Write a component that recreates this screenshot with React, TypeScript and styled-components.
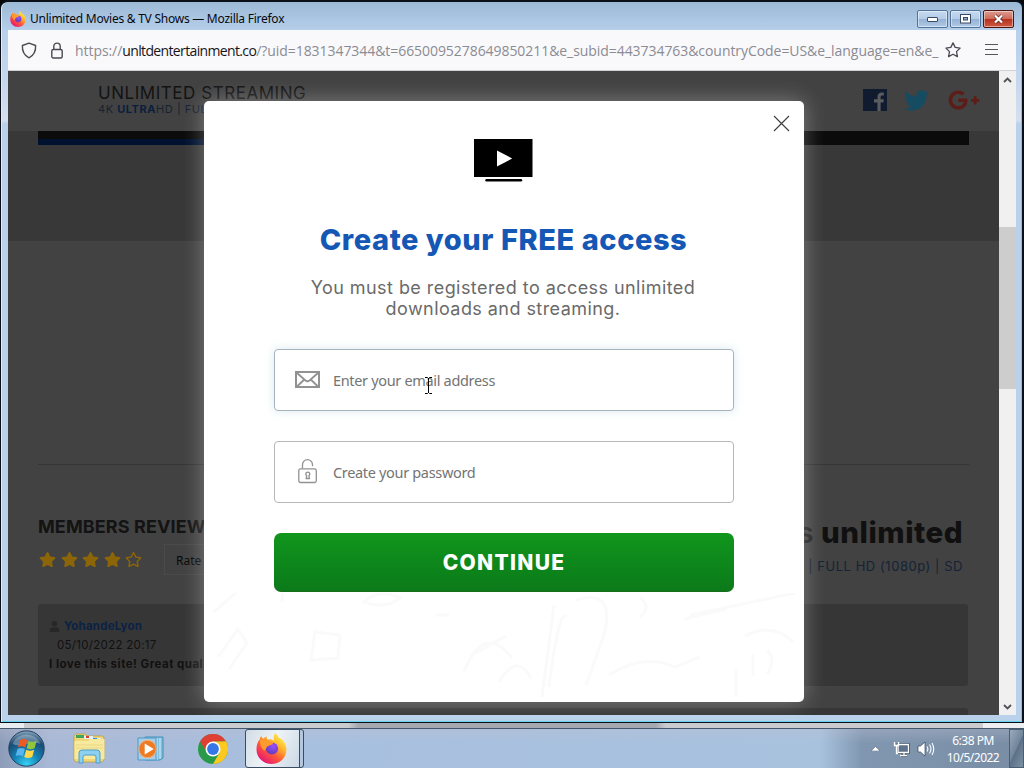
import React from "react";
import styled, { createGlobalStyle } from "styled-components";
import { FaGooglePlusG, FaRegStar, FaStar, FaTwitter, FaUser } from "react-icons/fa";

const GlobalStyle = createGlobalStyle`
  * {
    box-sizing: border-box;
  }
  body {
    margin: 0;
    overflow: hidden;
  }
  svg {
    display: block;
    flex: none;
  }
`;

const Desktop = styled.div`
  width: 1024px;
  height: 768px;
  display: flex;
  flex-direction: column;
  background: #05070b;
  font-family: "Open Sans", sans-serif;
`;

const BrowserWindow = styled.div`
  height: 723px;
  display: flex;
  flex-direction: column;
  border: solid #0b1018;
  border-width: 2px 2px 1px 1px;
  border-radius: 8px 8px 0 0;
  padding: 0 6px 0 7px;
  background: linear-gradient(180deg, #9cb9d6 0, #b7d0ec 30px, #c9d9ee 90px, #d6dff0 118px, #b9d1ea 122px, #b9d1ea 100%);
  box-shadow: inset 1px 0 #e2ecf5, inset -1px -1px #62d3ee;
`;

const TitleBar = styled.div`
  height: 28px;
  display: flex;
  align-items: center;
  padding: 5px 2px 0 2px;
`;

const WindowTitle = styled.div`
  flex: 1;
  padding-left: 4px;
  font-family: "Noto Sans", sans-serif;
  font-size: 12px;
  line-height: 18px;
  letter-spacing: -0.25px;
  color: #060a10;
  white-space: nowrap;
`;

const WindowButtons = styled.div`
  display: flex;
  gap: 2px;
`;

const WindowButton = styled.div<{ $danger?: boolean }>`
  width: 31px;
  height: 18px;
  display: flex;
  align-items: center;
  justify-content: center;
  border: 1px solid ${(p) => (p.$danger ? "#4e1410" : "#54739b")};
  border-radius: 2px;
  box-shadow: inset 0 0 0 1px rgba(255, 255, 255, 0.45);
  background: ${(p) =>
    p.$danger
      ? "linear-gradient(#dc9c90 0, #cf6a5a 48%, #b52f1d 50%, #cf5a42 100%)"
      : "linear-gradient(#c5d9ef 0, #b5cce8 48%, #94b1d4 50%, #b0cae6 100%)"};
`;

const AddressBar = styled.div`
  height: 41px;
  display: flex;
  align-items: center;
  padding: 0 17px 0 13px;
  background: #f9f9fb;
  border-bottom: 1px solid #cfcfd8;
`;

const Url = styled.div`
  flex: 1;
  padding: 1px 0 0 12px;
  font-size: 14px;
  letter-spacing: -0.06px;
  color: #8b8b93;
  white-space: nowrap;

  b {
    font-weight: 400;
    letter-spacing: -0.64px;
    color: #15141a;
  }
`;

const Viewport = styled.div`
  height: 644px;
  display: flex;
  position: relative;
`;

const Page = styled.div`
  width: 991px;
  height: 644px;
  overflow: hidden;
  background: #424242;
  font-family: Inter, sans-serif;
`;

const SiteHeader = styled.div`
  height: 60px;
  display: flex;
  justify-content: space-between;
  padding: 12px 19px 0 90px;
`;

const Brand = styled.div`
  font-size: 17px;
  line-height: 20px;
  letter-spacing: 0.54px;
  color: #131313;
  white-space: nowrap;
`;

const Tagline = styled.div`
  font-size: 11px;
  line-height: 13px;
  letter-spacing: 0.55px;
  color: #18222f;

  b {
    color: #0a1e3e;
  }
`;

const Socials = styled.div`
  display: flex;
  align-items: center;
  height: 34px;
`;

const Hero = styled.div`
  height: 110px;
  padding: 0 30px;
  background: #383838;
`;

const PlayerBar = styled.div`
  height: 14px;
  border-bottom: 6px solid #0d0d0d;
  background: #0b0b0b;
  border-image: linear-gradient(90deg, #001230 0 40%, #0b0b0b 40%) 1;
  border-top: 0;
  border-left: 0;
  border-right: 0;
`;

const Player = styled.div`
  height: 224px;
  margin: 0 30px;
  border-bottom: 1px solid #353535;
`;

const Columns = styled.div`
  height: 139px;
  display: flex;
  justify-content: space-between;
  padding: 48px 36px 0 30px;
`;

const SectionTitle = styled.div`
  font-size: 18px;
  line-height: 27px;
  font-weight: 700;
  letter-spacing: 0.1px;
  color: #131313;
`;

const Rating = styled.div`
  display: flex;
  align-items: center;
  gap: 4.6px;
  margin-top: 4px;
  padding-left: 1px;
  color: #8b6508;
`;

const RateButton = styled.div`
  margin-left: 17px;
  width: 90px;
  height: 31px;
  padding: 7px 0 0 11px;
  border: 1px solid #4a4a4a;
  font-family: "Noto Sans", sans-serif;
  font-size: 12px;
  color: #080808;
`;

const Offer = styled.div`
  text-align: right;
`;

const OfferTitle = styled.div`
  font-size: 29.5px;
  line-height: 39px;
  font-weight: 800;
  letter-spacing: 0.5px;
  color: #101010;

  span {
    font-weight: 600;
    color: #222;
  }
`;

const OfferFormats = styled.div`
  margin-top: 6px;
  font-size: 13px;
  line-height: 16px;
  letter-spacing: 0.55px;
  color: #142236;
`;

const Review = styled.div`
  height: 82px;
  margin: 0 31px 22px 30px;
  padding: 13px 11px;
  border-radius: 3px;
  background: #363636;
  font-size: 11.5px;
  line-height: 19px;
  color: #111;
  white-space: nowrap;
`;

const ReviewAuthor = styled.div`
  display: flex;
  align-items: center;
  gap: 4px;
  font-weight: 700;
  letter-spacing: 0.2px;
  color: #0b2245;
`;

const ReviewDate = styled.div`
  padding-left: 8px;
  letter-spacing: 0.3px;
`;

const ReviewText = styled.div`
  font-weight: 700;
  letter-spacing: 0.48px;
`;

const Scrollbar = styled.div`
  width: 17px;
  height: 644px;
  display: flex;
  flex-direction: column;
  align-items: center;
  background: #f0f0f0;
`;

const ScrollArrow = styled.div`
  height: 17px;
  display: flex;
  align-items: center;
`;

const ScrollThumb = styled.div`
  width: 17px;
  height: 162px;
  margin: 139px 0 309px;
  background: #cdcdcd;
`;

const Modal = styled.div`
  position: absolute;
  left: 196px;
  top: 30px;
  width: 600px;
  height: 601px;
  display: flex;
  flex-direction: column;
  align-items: center;
  padding-top: 38px;
  border-radius: 5px;
  background: #fff;
  box-shadow: 0 0 22px rgba(255, 255, 255, 0.32);
  font-family: Inter, sans-serif;
`;

const CloseButton = styled.div`
  position: absolute;
  top: 14px;
  right: 14px;
`;

const Logo = styled.div`
  padding-right: 2px;
`;

const ModalTitle = styled.div`
  margin-top: 40px;
  padding-right: 1px;
  font-size: 29px;
  line-height: 36px;
  font-weight: 800;
  letter-spacing: 0.56px;
  color: #1557b5;
  white-space: nowrap;
`;

const ModalText = styled.div`
  margin-top: 19px;
  padding-right: 2px;
  text-align: center;
  font-size: 18px;
  line-height: 21px;
  letter-spacing: 0.44px;
  color: #6a6a6a;
  white-space: nowrap;
`;

const Field = styled.div<{ $focused?: boolean }>`
  position: relative;
  width: 460px;
  height: 62px;
  flex: none;
  display: flex;
  align-items: center;
  margin-top: 30px;
  padding: 0 0 2px 20px;
  border: 1px solid ${(p) => (p.$focused ? "#a5b3bd" : "#b8b8bb")};
  border-radius: 4px;
  background: #fff;
  box-shadow: ${(p) => (p.$focused ? "0 0 10px rgba(110, 170, 195, 0.25)" : "none")};
`;

const Placeholder = styled.div`
  padding: 2px 0 0 13px;
  font-family: "Noto Sans", sans-serif;
  font-size: 14.5px;
  letter-spacing: -0.33px;
  color: #747474;
  white-space: nowrap;
`;

const TextCursor = styled.div`
  position: absolute;
  left: 149px;
  top: 27px;
`;

const ContinueButton = styled.div`
  width: 460px;
  height: 59px;
  display: flex;
  align-items: center;
  justify-content: center;
  margin-top: 30px;
  padding-top: 1px;
  border-radius: 7px;
  border-bottom: 1px solid #1a6c1d;
  background: linear-gradient(#10961d, #0b7a19);
  color: #fff;
  font-size: 21px;
  font-weight: 800;
  letter-spacing: 1.3px;
`;

const DesktopStrip = styled.div`
  height: 5px;
  background: linear-gradient(90deg, #e8edf2 0 24px, #c9cbcf 24px 34%, #a5a7b1 35% 64%, #c9cbcf 65% 983px, #eceef2 983px);
`;

const Taskbar = styled.div`
  height: 40px;
  display: flex;
  align-items: center;
  border-top: 1px solid #43576a;
  background: linear-gradient(rgba(190, 190, 210, 0.35), rgba(255, 255, 255, 0) 14px),
    linear-gradient(90deg, #8d9db9 0, #a8b9d7 50px, #a8c0df 310px, #a8c2de 820px, #8197b1 862px, #7a8fa6 1000px);
`;

const StartButton = styled.div`
  padding-left: 8px;
`;

const TaskIcon = styled.div<{ $gap: number }>`
  margin-left: ${(p) => p.$gap}px;
`;

const ActiveTask = styled.div`
  width: 59px;
  height: 39px;
  display: flex;
  align-items: center;
  margin-left: 17px;
  padding-left: 10px;
  border: 1px solid #3a4c61;
  border-radius: 3px;
  background: linear-gradient(90deg, rgba(255, 255, 255, 0) 53px, #3a4c61 53px 54px, #b3c7de 54px),
    linear-gradient(115deg, #d2dce6, #eef3f7 45%, #c7d5e3);
`;

const Tray = styled.div`
  margin-left: auto;
  display: flex;
  align-items: center;
  height: 39px;
  gap: 6px;
`;

const Clock = styled.div`
  width: 56px;
  margin-left: 4px;
  font-family: "Noto Sans", sans-serif;
  font-size: 12px;
  line-height: 17px;
  letter-spacing: -0.5px;
  text-align: center;
  color: #fff;
  white-space: nowrap;
`;

const ShowDesktop = styled.div`
  width: 15px;
  height: 39px;
  margin-left: 2px;
  border: 1px solid #4c5d70;
  background: linear-gradient(115deg, #9aaabb 0, #71849a 50%, #5b6f86 51%, #7d91a6 100%);
`;

const FirefoxIcon = ({ size }: { size: number }) => (
  <svg width={size} height={size} viewBox="0 0 32 32">
    <defs>
      <linearGradient id="ffBody" x1="0.85" y1="0.1" x2="0.2" y2="0.95">
        <stop offset="0" stopColor="#fff04a" />
        <stop offset="0.3" stopColor="#ffb52e" />
        <stop offset="0.6" stopColor="#ff5a36" />
        <stop offset="1" stopColor="#e3127a" />
      </linearGradient>
      <radialGradient id="ffGlobe" cx="0.6" cy="0.3" r="0.8">
        <stop offset="0" stopColor="#9a4dff" />
        <stop offset="1" stopColor="#5a3bb0" />
      </radialGradient>
    </defs>
    <path
      d="M20 0c2 2 3 3 3.400 5 4 1 8 6 8 12 0 9-7 15-15.400 15S.5 25.500.5 17c0-4 1-8 3.500-10.500C4 5 4.500 4 5.500 3c.5 1.500 1 2.300 2 3 1-1.500 2-2 3.500-2.500L11.500 7c3-1 5-.5 7 1C18 5 18 2.500 20 0z"
      fill="url(#ffBody)"
    />
    <circle cx="16.500" cy="16" r="6.300" fill="url(#ffGlobe)" />
    <path d="M4 7.500c3-2 8-1.500 10 1.500 1.500.5 3 .5 4 1-.8 2-3 2.500-5 3.200-2 1-2.500 2-3.800 5.200C5 16 4 11 4 7.500z" fill="#ff9a2c" />
  </svg>
);

const StartOrb = () => (
  <svg width="37" height="37" viewBox="0 0 37 37">
    <defs>
      <radialGradient id="orb" cx="0.5" cy="0.95" r="0.95">
        <stop offset="0" stopColor="#35d3f5" />
        <stop offset="0.4" stopColor="#1480b4" />
        <stop offset="0.75" stopColor="#1b4a74" />
        <stop offset="1" stopColor="#8ba9bf" />
      </radialGradient>
    </defs>
    <circle cx="18.500" cy="18.500" r="17.700" fill="url(#orb)" stroke="#24405d" />
    <path d="M4.500 14a15 15 0 0 1 28 0c-8-4-18 4-28 0z" fill="#fff" opacity="0.3" />
    <path d="M12 10c3-1.500 5-1.300 7.300.2l-2 7.300c-2.300-1.500-4.500-1.600-7.300-.3z" fill="#ef5a22" />
    <path d="M20.600 11c2.600 1.300 5 1.200 8-.2l-2 7.400c-3 1.400-5.400 1.300-8 .1z" fill="#8fc63d" />
    <path d="M9.600 18.800c2.800-1.300 5-1.200 7.300.2l-2 7.300c-2.300-1.400-4.500-1.500-7.300-.2z" fill="#58b5ed" />
    <path d="M18.200 19.800c2.600 1.300 5 1.200 8-.1l-2 7.200c-3 1.400-5.400 1.400-8 .2z" fill="#ffd84a" />
  </svg>
);

const ExplorerIcon = () => (
  <svg width="33" height="31" viewBox="0 0 33 31">
    <path d="M1 3l2-2h9l2 2h16l1 2v22l-2 2H3l-2-2z" fill="#efd778" stroke="#bb9d44" strokeWidth="0.8" />
    <path d="M3 2h8v3H3z" fill="#42a35c" />
    <path d="M11 3h9v3h-9z" fill="#e9f1f5" />
    <path d="M13 3h3v2h-3z" fill="#cf4433" />
    <path d="M19 5h9v3h-9z" fill="#dcebf8" />
    <path d="M20 5h4v2h-4z" fill="#3a8dd4" />
    <path d="M1.500 8h14l2-2h14v20H1.500z" fill="#f7e99e" />
    <path d="M3 12h27M3 15h27" stroke="#e9d27b" strokeWidth="0.8" />
    <path d="M6 30V20q0-3 3-3h15q3 0 3 3v10h-4v-6q0-2-2-2h-9q-2 0-2 2v6z" fill="#8dd0ef" stroke="#4b9fcc" />
  </svg>
);

const MediaPlayerIcon = () => (
  <svg width="28" height="26" viewBox="0 0 28 26">
    <path d="M8 1h18v21l-3 2H8z" fill="#83bedd" stroke="#428fb9" />
    <path d="M20 2v22M23 2v21" stroke="#d5edf8" />
    <path d="M1 2h18v22H1z" fill="#a9cde4" stroke="#4b9bc7" />
    <circle cx="10.500" cy="13" r="8.700" fill="#ee7a22" stroke="#f9b27a" strokeWidth="0.8" />
    <path d="M7.700 7.500l9 5.500-9 5.500z" fill="#fff" />
  </svg>
);

const ChromeIcon = () => (
  <svg width="30" height="30" viewBox="0 0 30 30">
    <circle cx="15" cy="15" r="15" fill="#2a9a4a" />
    <path d="M2 7.500A15 15 0 0 1 28 7.500H15L9 18.500z" fill="#df4034" />
    <path d="M28 7.500A15 15 0 0 1 15 30l6.500-11.300L21.500 8z" fill="#fbc91f" />
    <path d="M15 7.500h13l-6.500 4z" fill="#fbc91f" />
    <circle cx="15" cy="15" r="7.500" fill="#fff" />
    <circle cx="15" cy="15" r="5.900" fill="#3578e5" />
  </svg>
);

const ShieldIcon = () => (
  <svg width="16" height="17" viewBox="0 0 16 17" fill="none" stroke="#4a4a52" strokeWidth="1.4" strokeLinejoin="round">
    <path d="M8 1.200l6.600 2.300c.3 5.500-1.200 9.600-6.600 12.300C2.600 13.100 1.100 9 1.400 3.500z" />
  </svg>
);

const LockIcon = () => (
  <svg width="12" height="17" viewBox="0 0 12 17" fill="none" stroke="#4a4a52" strokeWidth="1.400">
    <rect x="0.800" y="7.500" width="10.400" height="8.500" rx="1.500" />
    <path d="M2.800 7.500V4.300a3.200 3.200 0 0 1 6.400 0v3.200" />
  </svg>
);

const BookmarkIcon = () => (
  <svg width="16" height="16" viewBox="0 0 16 16" fill="none" stroke="#4a4a52" strokeWidth="1.300" strokeLinejoin="round">
    <path d="M8 .9l2.200 4.500 4.900.7-3.600 3.500.9 5-4.400-2.400-4.400 2.400.9-5L.9 6.100l4.900-.7z" />
  </svg>
);

const MenuIcon = styled.div`
  width: 13px;
  height: 11px;
  margin: -1px 1px 0 24px;
  border: solid #55555d;
  border-width: 1px 0;
  display: flex;
  align-items: center;

  &::after {
    content: "";
    width: 13px;
    height: 1px;
    background: #55555d;
  }
`;

const FacebookIcon = () => (
  <svg width="24" height="22" viewBox="0 0 24 22">
    <path d="M0 0h24v22H0z" fill="#101b30" />
    <path d="M14.500 22v-8.500H11v-3.300h3.500V8c0-3 1.500-4.500 4.500-4.500h1.800v3h-1.400c-1.400 0-1.800.5-1.800 1.700v2h3.200l-.4 3.300h-2.800V22z" fill="#5a5c60" />
  </svg>
);

const TvLogo = () => (
  <svg width="60" height="43" viewBox="0 0 60 43">
    <path d="M1 0h58.500v38H1z" fill="#000" />
    <path d="M24 11.500v16L39.200 19.500z" fill="#fff" />
    <path d="M13.500 41.200h34.500" stroke="#000" strokeWidth="2.400" strokeLinecap="round" />
  </svg>
);

const EnvelopeIcon = () => (
  <svg width="25" height="17" viewBox="0 0 25 17" fill="none" stroke="#929292">
    <rect x="1" y="1" width="23" height="15" strokeWidth="2" />
    <path d="M2 2l8.500 7.500q2 1.500 4 0L23 2M2 15.500l7.300-7M23 15.500l-7.300-7" strokeWidth="1.800" />
  </svg>
);

const PadlockIcon = () => (
  <svg width="25" height="26" viewBox="0 0 25 26" fill="none" stroke="#929292" strokeWidth="1.300">
    <rect x="3.800" y="10.800" width="17.500" height="13.700" rx="1.800" />
    <path d="M7.500 10.500V6.700a5 5 0 0 1 10 0v1.500" />
    <path d="M11.200 20.500l.5-2.800a2 2 0 1 1 2.200 0l.5 2.800z" />
  </svg>
);

const Doodles = styled.svg`
  position: absolute;
  left: 0;
  bottom: 0;
`;

const App = () => {
  return (
    <Desktop>
      <GlobalStyle />
      <BrowserWindow>
        <TitleBar>
          <FirefoxIcon size={16} />
          <WindowTitle>Unlimited Movies &amp; TV Shows — Mozilla Firefox</WindowTitle>
          <WindowButtons>
            <WindowButton>
              <svg width="12" height="6" viewBox="0 0 12 6">
                <rect x="0.500" y="1.500" width="10" height="4" rx="0.500" fill="#fff" stroke="#3b4960" />
              </svg>
            </WindowButton>
            <WindowButton>
              <svg width="11" height="10" viewBox="0 0 11 10">
                <rect x="0.500" y="0.500" width="10" height="8.500" fill="#fff" stroke="#3b4960" />
                <rect x="3.500" y="3.500" width="4" height="2.500" fill="#8dabcf" stroke="#3b4960" />
              </svg>
            </WindowButton>
            <WindowButton $danger>
              <svg width="13" height="10" viewBox="0 0 13 10">
                <path d="M3 1.500l7 7M10 1.500l-7 7" stroke="#5d2a2a" strokeWidth="3.600" />
                <path d="M3 1.500l7 7M10 1.500l-7 7" stroke="#fff" strokeWidth="2.200" />
              </svg>
            </WindowButton>
          </WindowButtons>
        </TitleBar>

        <AddressBar>
          <ShieldIcon />
          <svg width="14" height="1" />
          <LockIcon />
          <Url>
            https://<b>unltdentertainment.co</b>
            /?uid=1831347344&amp;t=6650095278649850211&amp;e_subid=443734763&amp;countryCode=US&amp;e_language=en&amp;e_
          </Url>
          <BookmarkIcon />
          <MenuIcon />
        </AddressBar>

        <Viewport>
          <Page>
            <SiteHeader>
              <div>
                <Brand>UNLIMITED STREAMING</Brand>
                <Tagline>
                  4K <b>ULTRA</b>HD | FULL HD
                </Tagline>
              </div>
              <Socials>
                <FacebookIcon />
                <svg width="17" height="1" />
                <FaTwitter size={25} color="#164c62" />
                <svg width="19" height="1" />
                <FaGooglePlusG size={32} color="#5c1d18" />
              </Socials>
            </SiteHeader>
            <Hero>
              <PlayerBar />
            </Hero>
            <Player />
            <Columns>
              <div>
                <SectionTitle>MEMBERS REVIEWS</SectionTitle>
                <Rating>
                  <FaStar size={17} />
                  <FaStar size={17} />
                  <FaStar size={17} />
                  <FaStar size={17} />
                  <FaRegStar size={17} />
                  <RateButton>Rate</RateButton>
                </Rating>
              </div>
              <Offer>
                <OfferTitle>
                  <span>s</span> unlimited
                </OfferTitle>
                <OfferFormats>| FULL HD (1080p) | SD</OfferFormats>
              </Offer>
            </Columns>
            <Review>
              <ReviewAuthor>
                <FaUser size={11} color="#272727" />
                YohandeLyon
              </ReviewAuthor>
              <ReviewDate>05/10/2022 20:17</ReviewDate>
              <ReviewText>I love this site! Great quality</ReviewText>
            </Review>
            <Review />
          </Page>

          <Scrollbar>
            <ScrollArrow>
              <svg width="9" height="6" viewBox="0 0 9 6">
                <path d="M1 5l3.500-3.500L8 5" fill="none" stroke="#50535a" strokeWidth="1.900" />
              </svg>
            </ScrollArrow>
            <ScrollThumb />
            <ScrollArrow>
              <svg width="9" height="6" viewBox="0 0 9 6">
                <path d="M1 1l3.500 3.500L8 1" fill="none" stroke="#50535a" strokeWidth="1.900" />
              </svg>
            </ScrollArrow>
          </Scrollbar>

          <Modal>
            <Doodles width="600" height="109" viewBox="0 41 600 109" fill="none" stroke="#fafafa" strokeWidth="3">
              <path d="M10 60l25-22M14 105l20-28 9 14-18 26M60 38q22-20 18 12M107 108l4-28 25 3-2 23zM160 50q15-14 36-4-16 12-36 4zM232 63h13M260 120q20-50 48-14M270 102l32-18M295 130q18-30 32-4" />
              <path d="M338 145l12-92M372 48q40-12 28 35l-18 50M345 135q10-80 18-70M436 45q12 10 0 20M486 63l105-22M480 67l42-10M405 123q34-22 66-8l25-10M541 84q28-14 48 6M549 102v22M563 98q10 10 0 24M532 145v-28" />
            </Doodles>
            <CloseButton>
              <svg width="17" height="17" viewBox="0 0 17 17">
                <path d="M1 1l15 15M16 1L1 16" stroke="#3c3c3c" strokeWidth="1.100" />
              </svg>
            </CloseButton>
            <Logo>
              <TvLogo />
            </Logo>
            <ModalTitle>Create your FREE access</ModalTitle>
            <ModalText>
              You must be registered to access unlimited
              <br />
              downloads and streaming.
            </ModalText>
            <Field $focused>
              <EnvelopeIcon />
              <Placeholder>Enter your email address</Placeholder>
              <TextCursor>
                <svg width="9" height="17" viewBox="0 0 9 17">
                  <path d="M1 .5h2.500l1 1 1-1H8M4.500 1v15M1 16.500h2.500l1-1 1 1H8" fill="none" stroke="#000" />
                </svg>
              </TextCursor>
            </Field>
            <Field>
              <PadlockIcon />
              <Placeholder>Create your password</Placeholder>
            </Field>
            <ContinueButton>CONTINUE</ContinueButton>
          </Modal>
        </Viewport>
      </BrowserWindow>

      <DesktopStrip />
      <Taskbar>
        <StartButton>
          <StartOrb />
        </StartButton>
        <TaskIcon $gap={28}>
          <ExplorerIcon />
        </TaskIcon>
        <TaskIcon $gap={31}>
          <MediaPlayerIcon />
        </TaskIcon>
        <TaskIcon $gap={33}>
          <ChromeIcon />
        </TaskIcon>
        <ActiveTask>
          <FirefoxIcon size={31} />
        </ActiveTask>
        <Tray>
          <svg width="9" height="5" viewBox="0 0 9 5">
            <path d="M0 5l4.500-4.500L9 5z" fill="#fff" stroke="#455568" strokeWidth="0.500" />
          </svg>
          <svg width="1" height="1" />
          <svg width="18" height="16" viewBox="0 0 18 16">
            <path d="M5 3.500h10.500v8H5zM8 14.500h6M11 11.500v3" fill="#5e7389" stroke="#2a3a4c" strokeWidth="2.600" />
            <path d="M5 3.500h10.500v8H5zM7 14.500h7M11 11.500v3" fill="#5e7389" stroke="#fff" strokeWidth="1.300" />
            <path d="M1.500 1v3.500h4V1M3.500 4.500v8H5" fill="none" stroke="#fff" strokeWidth="1.300" />
          </svg>
          <svg width="18" height="16" viewBox="0 0 18 16">
            <path d="M1 5h2.500L8 1v14l-4.500-4H1z" fill="#fff" stroke="#34465a" strokeWidth="0.700" />
            <path d="M10 5.500q1.800 2.500 0 5M12.500 3.500q3 4.500 0 9M15 2q3.500 6 0 12" fill="none" stroke="#fff" strokeWidth="1.100" />
          </svg>
          <Clock>
            6:38 PM
            <br />
            10/5/2022
          </Clock>
          <ShowDesktop />
        </Tray>
      </Taskbar>
    </Desktop>
  );
};

export default App;
